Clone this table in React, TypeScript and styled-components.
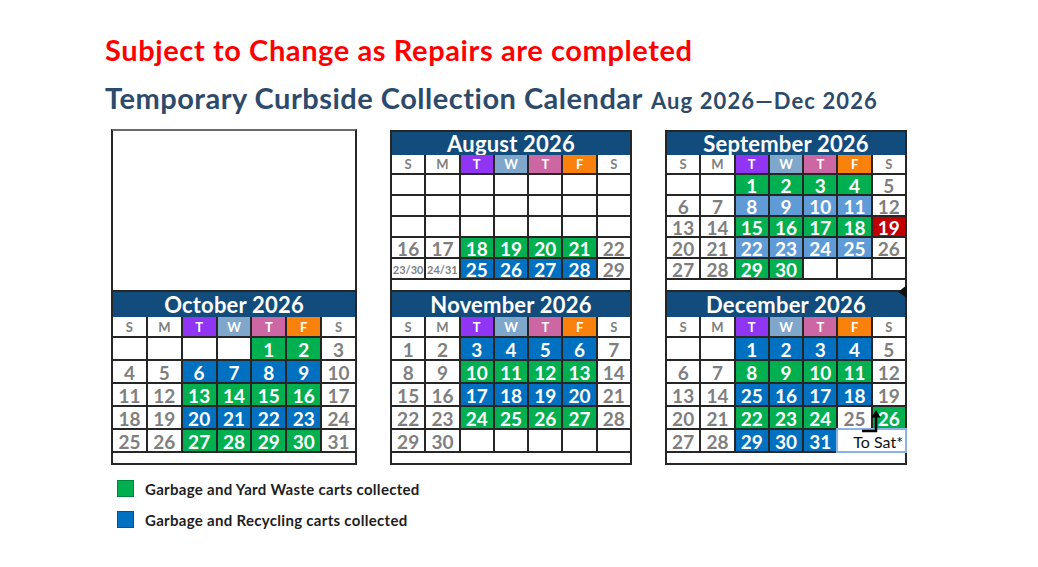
import React from 'react';
import styled, { createGlobalStyle } from 'styled-components';

const Global = createGlobalStyle`
  html, body { margin: 0; padding: 0; background: #fff; }
  body { font-family: Lato, "Open Sans", "DejaVu Sans", sans-serif; }
`;

const LINE = '#262626';
const GRAY = '#7f7f7f';
const NAVY = '#124c7c';
const GREEN = '#00b050';
const BLUE = '#0070c0';
const LIGHT = '#5f9bd6';
const RED = '#c00000';

const Page = styled.div`
  width: 1038px;
  height: 567px;
  box-sizing: border-box;
  padding-top: 36px;
  overflow: hidden;
  background: #fff;
`;

const Titles = styled.div`
  padding-left: 105px;
`;

const Warning = styled.h1`
  margin: 0;
  height: 28px;
  font-size: 29px;
  line-height: 28px;
  font-weight: 700;
  letter-spacing: 0.6px;
  color: #ff0000;
`;

const MainTitle = styled.h2`
  margin: 21px 0 0;
  height: 26px;
  font-size: 29px;
  line-height: 26px;
  font-weight: 700;
  letter-spacing: 0.5px;
  color: #2d4a6b;
  display: flex;
  align-items: baseline;
  gap: 8px;
  white-space: nowrap;
`;

const DateRange = styled.span`
  font-size: 22px;
  letter-spacing: 1.1px;
`;

const Board = styled.div`
  display: grid;
  grid-template-columns: 246px 242px 242px;
  column-gap: 33px;
  padding-left: 111px;
  margin-top: 19px;
`;

const Column = styled.div`
  display: flex;
  flex-direction: column;
`;

const EmptyBox = styled.div`
  height: 163px;
  box-sizing: border-box;
  margin-top: -1px;
  border: 2px solid ${LINE};
  border-top-color: #6b6b6b;
  background: #fff;
`;

const Panel = styled.div<{ $top?: boolean }>`
  position: relative;
  box-sizing: border-box;
  border: 2px solid ${LINE};
  border-top: ${(p) => (p.$top ? `2px solid ${LINE}` : 'none')};
  background: #fff;
  display: flex;
  flex-direction: column;
`;

const Header = styled.div<{ $h: number }>`
  height: ${(p) => p.$h}px;
  background: ${NAVY};
  color: #fff;
  font-size: 22px;
  font-weight: 700;
  line-height: ${(p) => p.$h}px;
  text-align: center;
  letter-spacing: 0.2px;
`;

const Grid = styled.div<{ $day: number; $row: number }>`
  display: grid;
  grid-template-columns: repeat(7, 1fr);
  grid-template-rows: ${(p) => p.$day}px repeat(5, ${(p) => p.$row}px);
  gap: 2px;
  background: ${LINE};
  border-bottom: 2px solid ${LINE};
`;

const Footer = styled.div`
  height: 10px;
  background: #fff;
`;

const DayName = styled.div<{ $bg: string; $fg: string }>`
  background: ${(p) => p.$bg};
  color: ${(p) => p.$fg};
  display: flex;
  align-items: center;
  justify-content: center;
  font-size: 13px;
  font-weight: 700;
`;

const Cell = styled.div<{ $bg: string; $fg: string; $small?: boolean }>`
  background: ${(p) => p.$bg};
  color: ${(p) => p.$fg};
  display: flex;
  align-items: center;
  justify-content: center;
  font-size: ${(p) => (p.$small ? '11px' : '19px')};
  font-weight: 700;
  line-height: 1;
  padding-top: 1px;
`;

const ToSat = styled.div`
  grid-column: span 2;
  position: relative;
  background: #fff;
  outline: 2px solid #8db3e2;
  z-index: 1;
  display: flex;
  align-items: flex-end;
  justify-content: flex-end;
  padding: 0 2px 1px 0;
  font-size: 16px;
  font-weight: 400;
  color: #111;
  line-height: 1;
`;

const ArrowSvg = styled.svg`
  position: absolute;
  left: 22px;
  top: -20px;
`;

const Notch = styled.svg`
  position: absolute;
  right: -2px;
  top: -7px;
  z-index: 2;
`;

const Legend = styled.div`
  display: flex;
  flex-direction: column;
  gap: 14px;
  padding-left: 117px;
  margin-top: 15px;
`;

const LegendItem = styled.div`
  display: flex;
  align-items: center;
  gap: 11px;
  height: 17px;
  font-size: 15px;
  font-weight: 700;
  letter-spacing: 0.3px;
  color: #1e1e1e;
`;

const Swatch = styled.span<{ $c: string }>`
  width: 17px;
  height: 17px;
  box-sizing: border-box;
  background: ${(p) => p.$c};
  border: 1px solid rgba(0, 0, 0, 0.25);
`;

const DAY_NAMES: [string, string, string][] = [
  ['S', '#fff', GRAY],
  ['M', '#fff', GRAY],
  ['T', '#9135f5', '#fff'],
  ['W', '#7fa6cb', '#fff'],
  ['T', '#cd67a3', '#fff'],
  ['F', '#fa820c', '#fff'],
  ['S', '#fff', GRAY],
];

const COLORS: Record<string, string> = { g: GREEN, b: BLUE, l: LIGHT, r: RED };

type Month = { name: string; rows: string[][] };

const parse = (s: string) => {
  if (!s) return { bg: '#fff', fg: GRAY, text: '', small: false };
  const [k, v] = s.includes(':') ? s.split(':') : ['', s];
  if (k === 's') return { bg: '#fff', fg: GRAY, text: v, small: true };
  if (k && COLORS[k]) return { bg: COLORS[k], fg: '#fff', text: v, small: false };
  return { bg: '#fff', fg: GRAY, text: v, small: false };
};

const august: Month = {
  name: 'August 2026',
  rows: [
    ['', '', '', '', '', '', ''],
    ['', '', '', '', '', '', ''],
    ['', '', '', '', '', '', ''],
    ['16', '17', 'g:18', 'g:19', 'g:20', 'g:21', '22'],
    ['s:23/30', 's:24/31', 'b:25', 'b:26', 'b:27', 'b:28', '29'],
  ],
};

const september: Month = {
  name: 'September 2026',
  rows: [
    ['', '', 'g:1', 'g:2', 'g:3', 'g:4', '5'],
    ['6', '7', 'l:8', 'l:9', 'l:10', 'l:11', '12'],
    ['13', '14', 'g:15', 'g:16', 'g:17', 'g:18', 'r:19'],
    ['20', '21', 'l:22', 'l:23', 'l:24', 'l:25', '26'],
    ['27', '28', 'g:29', 'g:30', '', '', ''],
  ],
};

const october: Month = {
  name: 'October 2026',
  rows: [
    ['', '', '', '', 'g:1', 'g:2', '3'],
    ['4', '5', 'b:6', 'b:7', 'b:8', 'b:9', '10'],
    ['11', '12', 'g:13', 'g:14', 'g:15', 'g:16', '17'],
    ['18', '19', 'b:20', 'b:21', 'b:22', 'b:23', '24'],
    ['25', '26', 'g:27', 'g:28', 'g:29', 'g:30', '31'],
  ],
};

const november: Month = {
  name: 'November 2026',
  rows: [
    ['1', '2', 'b:3', 'b:4', 'b:5', 'b:6', '7'],
    ['8', '9', 'g:10', 'g:11', 'g:12', 'g:13', '14'],
    ['15', '16', 'b:17', 'b:18', 'b:19', 'b:20', '21'],
    ['22', '23', 'g:24', 'g:25', 'g:26', 'g:27', '28'],
    ['29', '30', '', '', '', '', ''],
  ],
};

const december: Month = {
  name: 'December 2026',
  rows: [
    ['', '', 'b:1', 'b:2', 'b:3', 'b:4', '5'],
    ['6', '7', 'g:8', 'g:9', 'g:10', 'g:11', '12'],
    ['13', '14', 'b:25', 'b:16', 'b:17', 'b:18', '19'],
    ['20', '21', 'g:22', 'g:23', 'g:24', '25', 'g:26'],
    ['27', '28', 'b:29', 'b:30', 'b:31', 'TOSAT'],
  ],
};

const MonthPanel: React.FC<{ month: Month; top?: boolean; notch?: boolean }> = ({ month, top, notch }) => (
  <Panel $top={top}>
    {notch && (
      <Notch width="11" height="14" viewBox="0 0 11 14">
        <polygon points="11,0 2,7 11,13" fill="#111" />
      </Notch>
    )}
    <Header $h={top ? 23 : 25}>{month.name}</Header>
    <Grid $day={top ? 18 : 19} $row={top ? 19 : 21}>
      {DAY_NAMES.map(([d, bg, fg], i) => (
        <DayName key={`d${i}`} $bg={bg} $fg={fg}>
          {d}
        </DayName>
      ))}
      {month.rows.map((row, r) =>
        row.map((v, c) => {
          if (v === 'TOSAT') {
            return (
              <ToSat key={`${r}-${c}`}>
                <ArrowSvg width="22" height="23" viewBox="0 0 22 23">
                  <polyline points="2,21 16,21 16,6" fill="none" stroke="#000" strokeWidth="2.5" />
                  <polygon points="16,0 11.5,7.5 20.5,7.5" fill="#000" />
                </ArrowSvg>
                To Sat*
              </ToSat>
            );
          }
          const p = parse(v);
          return (
            <Cell key={`${r}-${c}`} $bg={p.bg} $fg={p.fg} $small={p.small}>
              {p.text}
            </Cell>
          );
        })
      )}
    </Grid>
    <Footer />
  </Panel>
);

export default function App() {
  return (
    <Page>
      <Global />
      <Titles>
        <Warning>Subject to Change as Repairs are completed</Warning>
        <MainTitle>
          Temporary Curbside Collection Calendar
          <DateRange>Aug 2026—Dec 2026</DateRange>
        </MainTitle>
      </Titles>
      <Board>
        <Column>
          <EmptyBox />
          <MonthPanel month={october} />
        </Column>
        <Column>
          <MonthPanel month={august} top />
          <MonthPanel month={november} />
        </Column>
        <Column>
          <MonthPanel month={september} top />
          <MonthPanel month={december} notch />
        </Column>
      </Board>
      <Legend>
        <LegendItem>
          <Swatch $c={GREEN} />
          Garbage and Yard Waste carts collected
        </LegendItem>
        <LegendItem>
          <Swatch $c={BLUE} />
          Garbage and Recycling carts collected
        </LegendItem>
      </Legend>
    </Page>
  );
}
